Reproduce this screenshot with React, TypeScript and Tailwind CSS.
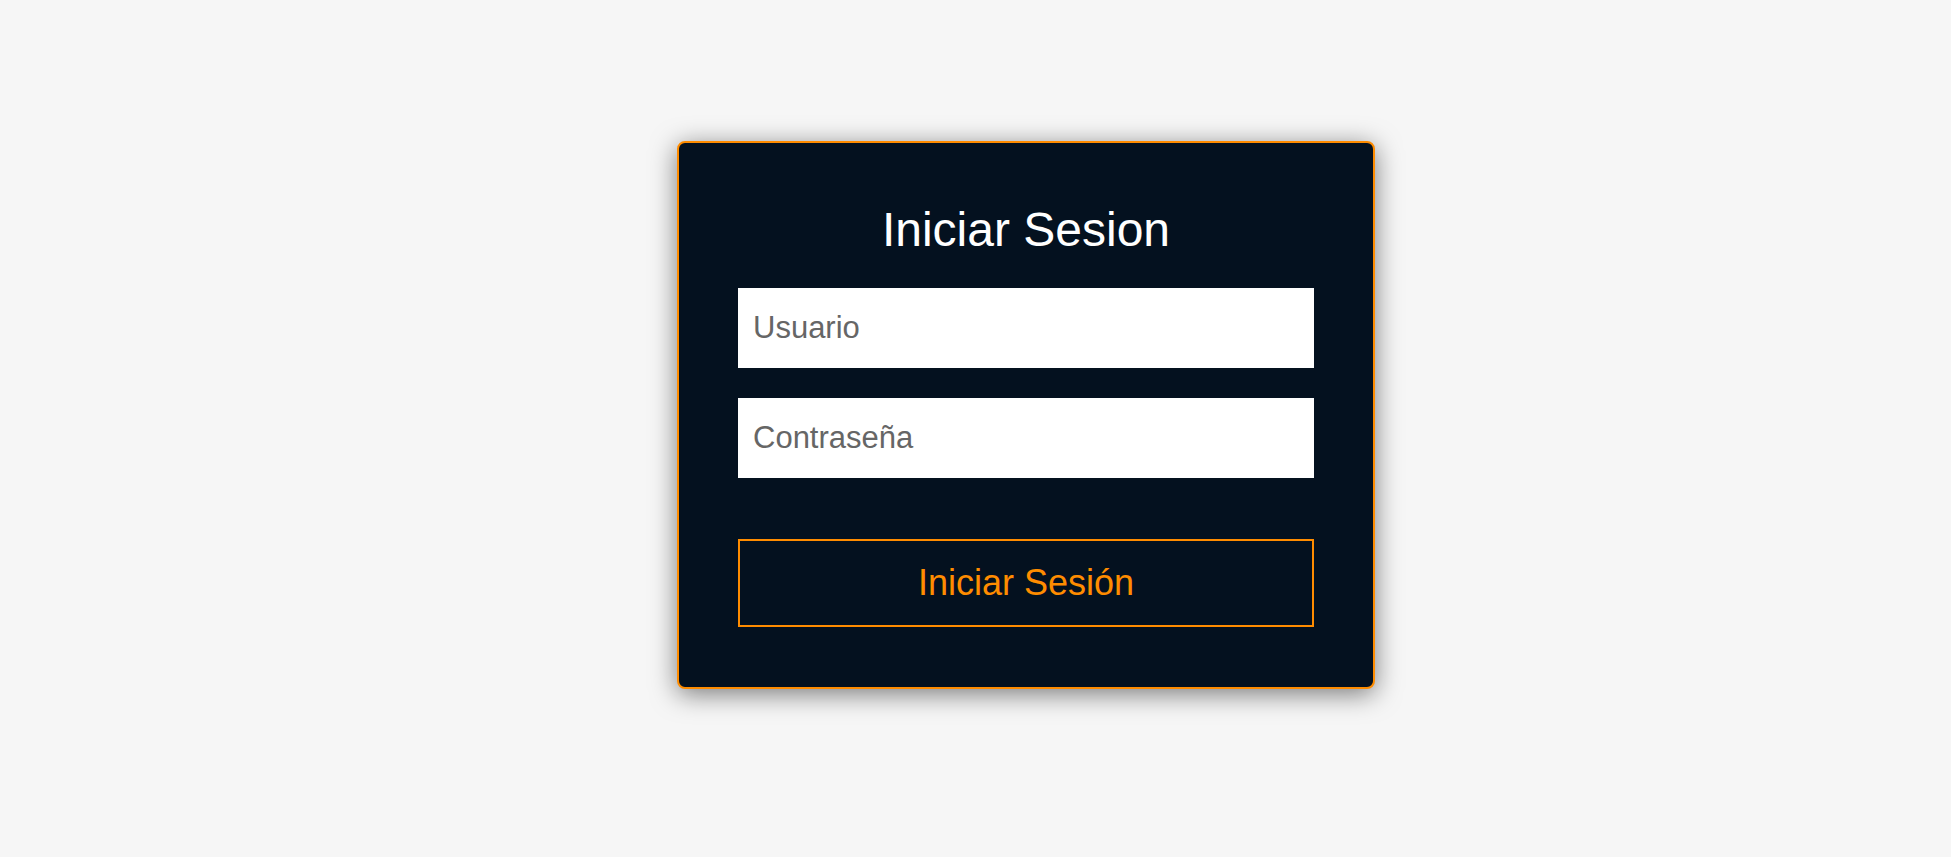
import React, { useState } from 'react';

const LoginCard: React.FC = () => {
  const [usuario, setUsuario] = useState('');
  const [clave, setClave] = useState('');

  return (
    <form
      onSubmit={(e) => e.preventDefault()}
      className="w-[698px] rounded-[8px] border-2 border-[#ff8c00] bg-[#04111f] px-[59px] pt-[59px] pb-[60px] shadow-[0_5px_26px_rgba(0,0,0,0.5)]"
    >
      <h2 className="mb-[31px] text-center text-[48px] leading-[55px] font-normal text-white">
        Iniciar Sesion
      </h2>
      <input
        type="text"
        value={usuario}
        onChange={(e) => setUsuario(e.target.value)}
        placeholder="Usuario"
        className="block h-[80px] w-full bg-white px-[15px] text-[31px] text-[#666] placeholder-[#666] outline-none"
      />
      <input
        type="password"
        value={clave}
        onChange={(e) => setClave(e.target.value)}
        placeholder="Contraseña"
        className="mt-[30px] block h-[80px] w-full bg-white px-[15px] text-[31px] text-[#666] placeholder-[#666] outline-none"
      />
      <button
        type="submit"
        className="mt-[61px] block h-[88px] w-full border-2 border-[#ff8c00] bg-transparent text-[36px] text-[#ff8c00]"
      >
        Iniciar Sesión
      </button>
    </form>
  );
};

export default function App() {
  return (
    <div className="min-h-[857px] bg-[#f6f6f6] pt-[141px] pl-[677px] font-['Liberation_Sans',Arial,sans-serif]">
      <LoginCard />
    </div>
  );
}
